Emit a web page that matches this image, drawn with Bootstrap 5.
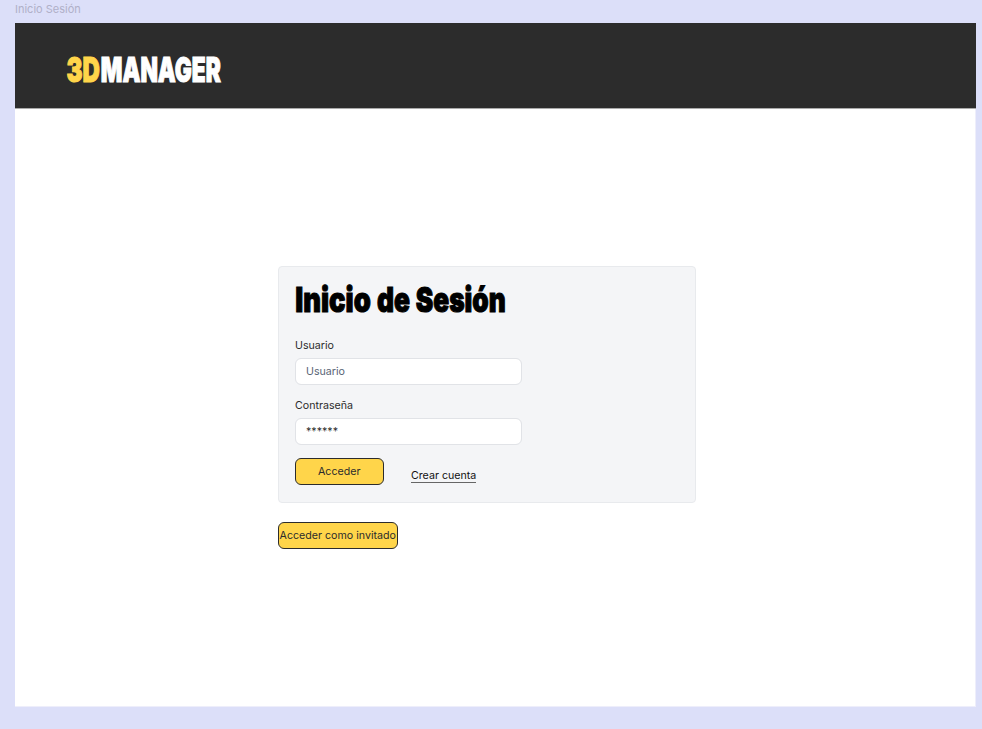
<!DOCTYPE html>
<html lang="es">
<head>
<meta charset="utf-8">
<meta name="viewport" content="width=device-width, initial-scale=1">
<title>3DManager - Inicio de Sesión</title>
<link href="https://cdn.jsdelivr.net/npm/bootstrap@5.3.0/dist/css/bootstrap.min.css" rel="stylesheet">
<style>
body{background:#dcdff9;font-family:Inter,sans-serif;font-size:10.67px;line-height:16px;color:#2c2c2c;height:729px;overflow:hidden;padding:1px 6px 22px 15px}
.frame-label{color:#b0b0c8;height:22px;font-size:11px}
.app-frame{height:684px;background:#fff;border-right:1px solid #eeeefb;border-bottom:1px solid #eeeefb}
.top-bar{height:85px;background:#2c2c2c;padding:26px 0 0 47px;margin-right:-1px;box-shadow:0 1px #aaa}
.display-text{font-family:Inter,sans-serif;font-weight:900;font-size:34.5px;stroke-width:1.1px;overflow:visible}
.display-text .gold{fill:#ffd54a;stroke:#ffd54a}
.display-text .light{fill:#fff;stroke:#fff}
.display-text .dark{fill:#000;stroke:#000}
.login-area{width:418.5px;margin:158px 0 0 262.5px}
.login-box{height:237px;background:#f4f5f7;border:1px solid #e8eaed;border-radius:4px;padding:14px 16px 0}
.login-box h1{height:38px;margin:0 0 19px}
.login-box .form-label{margin:0 0 4px .5px;height:16px}
.login-box .form-control{width:227.5px;height:27px;font-size:10.67px;line-height:16px;padding:0 10.5px;border:1px solid #e1e3e7;border-radius:6px;color:#2c2c2c}
.login-box .form-control::placeholder{color:#596475;opacity:1}
.field{margin-bottom:13px}
.btn-gold{--bs-btn-bg:#ffd54a;--bs-btn-color:#2c2c2c;--bs-btn-border-color:#2c2c2c;--bs-btn-hover-bg:#ffca28;--bs-btn-hover-color:#2c2c2c;--bs-btn-font-size:10.67px;--bs-btn-line-height:16px;--bs-btn-border-radius:6px;--bs-btn-padding-x:0;--bs-btn-padding-y:0;height:27px;white-space:nowrap}
.btn-enter{width:89.5px}
.create-link{color:#111;line-height:13px;border-bottom:1px solid #666;margin:11px 0 0 27px}
.btn-guest{width:120.5px;margin-top:19px}
</style>
</head>
<body>
<div class="frame-label">Inicio Sesión</div>
<div class="app-frame">
  <header class="top-bar">
    <a href="#" class="d-block" aria-label="3DMANAGER">
      <svg class="display-text d-block" width="170" height="40"><text class="gold" x="4.5" y="32.6" textLength="33.5" lengthAdjust="spacingAndGlyphs">3D</text><text class="light" x="38.8" y="32.6" textLength="120" lengthAdjust="spacingAndGlyphs">MANAGER</text></svg>
    </a>
  </header>
  <main class="login-area">
    <form class="login-box">
      <h1><svg class="display-text d-block" width="230" height="38"><text class="dark" x=".3" y="30.6" textLength="75.5" lengthAdjust="spacingAndGlyphs">Inicio</text><text class="dark" x="82" y="30.6" textLength="33" lengthAdjust="spacingAndGlyphs">de</text><text class="dark" x="120.8" y="30.6" textLength="90" lengthAdjust="spacingAndGlyphs">Sesión</text></svg></h1>
      <div class="field">
        <label class="form-label d-block" for="user">Usuario</label>
        <input class="form-control" id="user" type="text" placeholder="Usuario">
      </div>
      <div class="field">
        <label class="form-label d-block" for="pass">Contraseña</label>
        <input class="form-control" id="pass" type="text" value="******">
      </div>
      <div class="d-flex align-items-start">
        <button class="btn btn-gold btn-enter" type="button">Acceder</button>
        <a href="#" class="create-link text-decoration-none">Crear cuenta</a>
      </div>
    </form>
    <button class="btn btn-gold btn-guest" type="button">Acceder como invitado</button>
  </main>
</div>
<script src="https://cdn.jsdelivr.net/npm/bootstrap@5.3.0/dist/js/bootstrap.bundle.min.js"></script>
</body>
</html>
